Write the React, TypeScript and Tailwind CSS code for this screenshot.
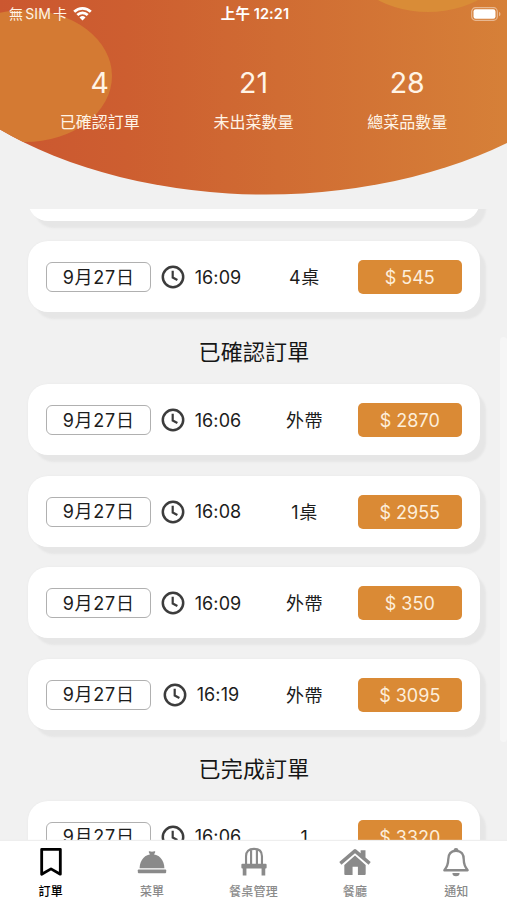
import React from "react";

type Order = { time: string; table: string; price: string };

const stats = [
  { value: "4", label: "已確認訂單" },
  { value: "21", label: "未出菜數量" },
  { value: "28", label: "總菜品數量" },
];

const confirmed: Order[] = [
  { time: "16:06", table: "外帶", price: "$ 2870" },
  { time: "16:08", table: "1桌", price: "$ 2955" },
  { time: "16:09", table: "外帶", price: "$ 350" },
  { time: "16:19", table: "外帶", price: "$ 3095" },
];

function OrderCard({ order }: { order: Order }) {
  return (
    <div className="flex h-[71px] shrink-0 items-center rounded-[20px] bg-white px-[18px] pt-px text-[18px] text-[#1c1c1c] shadow-[6px_7px_2px_#e6e6e6,0_0_2px_#e8e8e8]">
      <div className="flex h-[30px] w-[104.5px] shrink-0 items-center justify-center rounded-[6px] border-[1.5px] border-[#b0b0b0] pt-px pl-[1px] leading-none tracking-[0.75px]">
        9月27日
      </div>
      <div className="flex w-[101px] shrink-0 items-center justify-center gap-[10px]">
        <svg width="24" height="24" viewBox="0 0 24 24" fill="none" stroke="#3c3c3c" strokeWidth="2.5">
          <circle cx="12" cy="12" r="10.2" />
          <path d="M11.7 5.8v6.7l4.7 2.5" strokeWidth="2.2" />
        </svg>
        <span className="tracking-[0.1px]">{order.time}</span>
      </div>
      <div className="flex-1 pt-px text-center tracking-[0.6px]">{order.table}</div>
      <div className="flex h-[34px] w-[104.5px] shrink-0 items-center justify-center rounded-[5px] bg-[#da8a35] pt-px text-[#fdeedb]">
        {order.price}
      </div>
    </div>
  );
}

function SectionTitle({ children }: { children: React.ReactNode }) {
  return (
    <h2 className="flex h-[32px] shrink-0 items-center justify-center text-[22px] tracking-[0.2px] text-[#161616]">
      {children}
    </h2>
  );
}

function Tab({ label, active, children }: { label: string; active?: boolean; children: React.ReactNode }) {
  return (
    <div
      className={
        active
          ? "flex flex-1 flex-col items-center text-black"
          : "flex flex-1 flex-col items-center text-[#8a8a8a]"
      }
    >
      <svg width="34" height="34" viewBox="0 0 34 34" fill="none" stroke="currentColor" className="mt-[4px]">
        {children}
      </svg>
      <span className="mt-[6px] text-[12px] leading-[16px] font-medium tracking-[0.2px]">{label}</span>
    </div>
  );
}

export default function App() {
  return (
    <div className="relative flex h-[900px] w-[507px] flex-col overflow-hidden bg-[#f1f1f1] font-[Inter,'Noto_Sans_CJK_TC',sans-serif]">
      <header className="relative h-[209px] shrink-0 text-[#fff4e6]">
        <svg className="absolute inset-0" width="507" height="209" viewBox="0 0 507 209">
          <defs>
            <linearGradient id="sky" gradientUnits="userSpaceOnUse" x1="0" y1="0" x2="507" y2="0">
              <stop offset="0" stopColor="#cb5730" />
              <stop offset="0.25" stopColor="#cd5e30" />
              <stop offset="0.55" stopColor="#d06c33" />
              <stop offset="1" stopColor="#d68038" />
            </linearGradient>
            <clipPath id="dome">
              <ellipse cx="266" cy="-35.5" rx="382" ry="230" />
            </clipPath>
          </defs>
          <g clipPath="url(#dome)">
            <rect width="507" height="209" fill="url(#sky)" />
            <ellipse cx="25" cy="76" rx="87" ry="66" fill="#d47a33" />
            <ellipse cx="428" cy="-54" rx="87" ry="66" fill="#d98c37" />
          </g>
        </svg>
        <div className="relative flex h-[27px] items-center justify-between pr-[6px] pl-[9px] text-[14px]">
          <div className="flex w-[150px] items-center gap-[6px]">
            <span className="tracking-[0.2px] whitespace-nowrap [word-spacing:-2.2px]">無 SIM 卡</span>
            <svg width="19" height="15" viewBox="0 0 19 15" fill="none" stroke="white" strokeWidth="2.7">
              <path d="M1.2 5.7a11.8 11.8 0 0 1 16.6 0" />
              <path d="M4.3 9a7.4 7.4 0 0 1 10.4 0" />
              <path d="M6.5 11.4a4.3 4.3 0 0 1 6 0l-3 3z" fill="white" stroke="none" />
            </svg>
          </div>
          <span className="text-[14.5px] font-semibold tracking-[0.1px] text-white">上午 12:21</span>
          <div className="flex w-[150px] justify-end">
            <svg width="30" height="14" viewBox="0 0 30 14">
              <rect x="0.7" y="0.7" width="25.6" height="12.6" rx="3.8" fill="none" stroke="#fff" strokeOpacity="0.45" strokeWidth="1.2" />
              <rect x="2.5" y="2.3" width="22" height="9.4" rx="2.2" fill="white" />
              <path d="M28 4.7a2.5 2.5 0 0 1 0 4.6z" fill="#fff" fillOpacity="0.45" />
            </svg>
          </div>
        </div>
        <div className="relative grid grid-cols-3 px-[23px] pt-[38px]">
          {stats.map((s) => (
            <div key={s.label} className="flex flex-col items-center">
              <span className="text-[28.5px] leading-[36px]">{s.value}</span>
              <span className="mt-[9px] text-[16px] leading-[24px]">{s.label}</span>
            </div>
          ))}
        </div>
      </header>

      <main className="flex min-h-0 flex-1 flex-col overflow-hidden pr-[27px] pl-[28px]">
        <div className="-mt-[59.5px] flex flex-col gap-[20.6px]">
          <div className="h-[71px] rounded-[20px] bg-white shadow-[6px_7px_2px_#e6e6e6]" />
          <OrderCard order={{ time: "16:09", table: "4桌", price: "$ 545" }} />
        </div>
        <div className="pt-[24px] pb-[16px]">
          <SectionTitle>已確認訂單</SectionTitle>
        </div>
        <div className="flex flex-col gap-[20.6px]">
          {confirmed.map((o) => (
            <OrderCard key={o.time} order={o} />
          ))}
        </div>
        <div className="pt-[24px] pb-[15px]">
          <SectionTitle>已完成訂單</SectionTitle>
        </div>
        <OrderCard order={{ time: "16:06", table: "1", price: "$ 3320" }} />
      </main>
      <div className="absolute top-[337px] right-0 h-[405px] w-[7px] rounded bg-[#f6f6f6]" />

      <nav className="z-10 flex h-[59px] shrink-0 bg-white shadow-[0_-1px_1px_#eeeeee]">
        <Tab label="訂單" active>
          <path d="M7.4 4.5h19.2v25.6L17 24.6l-9.6 5.5z" strokeWidth="2.9" strokeLinejoin="round" />
        </Tab>
        <Tab label="菜單">
          <g fill="currentColor" stroke="none">
            <path d="M4.2 24C4.600 15 10 9.600 17 9.600S29.400 15 29.800 24z" />
            <path d="M13.600 7.200q0-.9.900-.7l2.500.5 2.500-.5q.9-.2.900.7l-1.700 3.300h-3.400z" />
            <rect x="2.400" y="25.200" width="29.200" height="3.800" rx="0.800" />
          </g>
        </Tab>
        <Tab label="餐桌管理">
          <path d="M8.800 20V11.500C8.800 6.500 11.500 4 17 4s8.200 2.500 8.200 7.500V20M14 20V5M20 20V5" strokeWidth="2.200" />
          <g fill="currentColor" stroke="none">
            <path d="M5 19.300h24q1 0 1 1v3q0 1-1 1h-.4V31.500h-3.800V24.300H9.200v7.200H5.400V24.300H5q-1 0-1-1v-3q0-1 1-1z" />
          </g>
        </Tab>
        <Tab label="餐廳">
          <g fill="currentColor" stroke="none">
            <path d="M17 10.800 28 20.500V30q0 1-1 1h-7v-8.500h-5.500V31H7q-1 0-1-1v-9.500z" />
            <path d="M15.800 4.600q1.200-1 2.400 0l4.600 4V5.300h5v7.600l5.400 4.700-2.200 2.800L17 8.500 3 20.400l-2.200-2.800z" />
          </g>
        </Tab>
        <Tab label="通知">
          <path d="M17 6c-5.800 0-8 3.800-8 9 0 5.500-1.500 8-4 11h24c-2.500-3-4-5.500-4-11 0-5.200-2.200-9-8-9z" strokeWidth="2.400" strokeLinejoin="round" />
          <path d="M14.300 6.500a2.700 3.500 0 0 1 5.400 0zM13.300 28.800h7.400a3.700 3.400 0 0 1-7.400 0z" fill="currentColor" stroke="none" />
        </Tab>
      </nav>
    </div>
  );
}
